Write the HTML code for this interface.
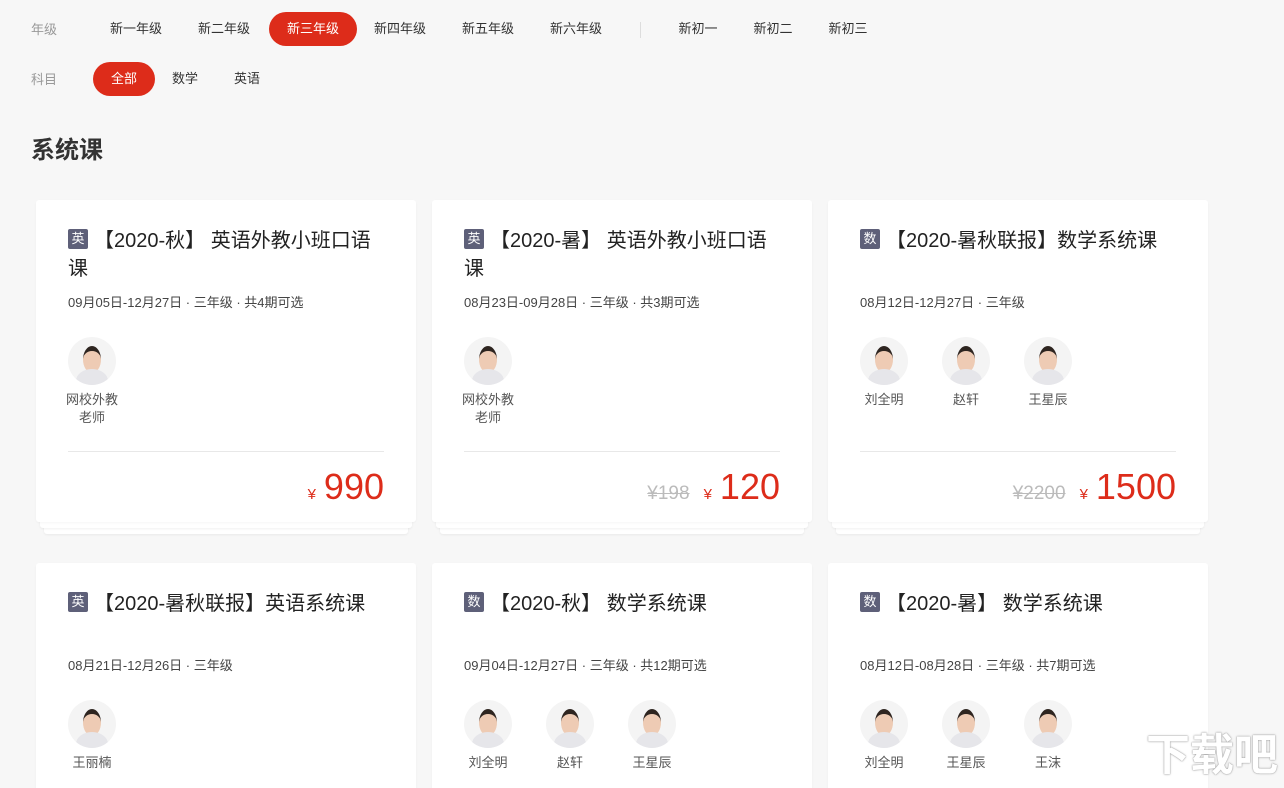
<!DOCTYPE html><html><head><meta charset="utf-8"><style>
*{margin:0;padding:0;box-sizing:border-box}
html,body{width:1284px;height:788px;overflow:hidden}
body{background:#f7f7f7;font-family:"Liberation Sans","Noto Sans CJK SC",sans-serif;position:relative;color:#222}
.a{position:absolute}
.lbl{color:#999;font-size:13px;line-height:18px}
.tab{font-size:13px;color:#333;height:34px;line-height:34px;text-align:center;border-radius:17px}
.on{background:#dd2c1a;color:#fff}
.card{position:absolute;width:380px;height:322px;background:#fff;border-radius:3px;box-shadow:0 1px 2px rgba(0,0,0,.04)}
.stk{position:absolute;background:#fff;border-radius:3px;box-shadow:0 1px 2px rgba(0,0,0,.06)}
.badge{position:absolute;left:32px;top:29px;width:20px;height:20px;background:#5e6079;color:#fff;font-size:13px;line-height:20px;text-align:center;border-radius:2px}
.ttl{position:absolute;left:32px;top:27px;width:320px;font-size:20px;line-height:28px;color:#222;text-indent:26px}
.date{position:absolute;left:32px;font-size:13px;color:#444}
.t{position:absolute;width:60px;text-align:center;font-size:13px;color:#555;line-height:18px}
.av{width:48px;height:48px;border-radius:50%;margin:0 auto 6px;position:relative;overflow:hidden;background:#f4f4f4}
.av:before{content:"";position:absolute;left:15px;top:9px;width:18px;height:22px;border-radius:50%;background:#eecbb4;border-top:5px solid #2e2520}
.av:after{content:"";position:absolute;left:8px;top:32px;width:32px;height:24px;border-radius:50% 50% 0 0;background:#e6e6ea}
.hr{position:absolute;left:32px;right:32px;top:251px;border-top:1px solid #e8e8e8}
.price{position:absolute;right:32px;top:266px;color:#dd2c1a;font-size:36px;white-space:nowrap}
.price .y{font-size:15px;margin-right:8px}
.price s{color:#bbb;font-size:19px;margin-right:14px}
</style></head><body>
<div class="a lbl" style="left:31px;top:21px">年级</div>
<div class="a tab" style="left:98px;top:12px;width:76px">新一年级</div>
<div class="a tab" style="left:186px;top:12px;width:76px">新二年级</div>
<div class="a tab on" style="left:269px;top:12px;width:88px">新三年级</div>
<div class="a tab" style="left:362px;top:12px;width:76px">新四年级</div>
<div class="a tab" style="left:450px;top:12px;width:76px">新五年级</div>
<div class="a tab" style="left:538px;top:12px;width:76px">新六年级</div>
<div class="a" style="left:640px;top:22px;height:16px;border-left:1px solid #ddd"></div>
<div class="a tab" style="left:668px;top:12px;width:60px">新初一</div>
<div class="a tab" style="left:743px;top:12px;width:60px">新初二</div>
<div class="a tab" style="left:818px;top:12px;width:60px">新初三</div>
<div class="a lbl" style="left:31px;top:71px">科目</div>
<div class="a tab on" style="left:93px;top:62px;width:62px">全部</div>
<div class="a tab" style="left:165px;top:62px;width:40px">数学</div>
<div class="a tab" style="left:227px;top:62px;width:40px">英语</div>
<div class="a" style="left:31px;top:130px;font-size:24px;font-weight:bold;color:#333">系统课</div>

<div class="stk" style="left:44px;top:520px;width:364px;height:14px"></div><div class="stk" style="left:40px;top:518px;width:372px;height:10px"></div>
<div class="card" style="left:36px;top:200px">
<div class="badge">英</div><div class="ttl">【2020-秋】 英语外教小班口语课</div>
<div class="date" style="top:92px">09月05日-12月27日 · 三年级 · 共4期可选</div>
<div class="t" style="left:26px;top:137px"><div class="av"></div>网校外教<br>老师</div>
<div class="hr"></div><div class="price"><span class="y">¥</span>990</div></div>

<div class="stk" style="left:440px;top:520px;width:364px;height:14px"></div><div class="stk" style="left:436px;top:518px;width:372px;height:10px"></div>
<div class="card" style="left:432px;top:200px">
<div class="badge">英</div><div class="ttl">【2020-暑】 英语外教小班口语课</div>
<div class="date" style="top:92px">08月23日-09月28日 · 三年级 · 共3期可选</div>
<div class="t" style="left:26px;top:137px"><div class="av"></div>网校外教<br>老师</div>
<div class="hr"></div><div class="price"><s>¥198</s><span class="y">¥</span>120</div></div>

<div class="stk" style="left:836px;top:520px;width:364px;height:14px"></div><div class="stk" style="left:832px;top:518px;width:372px;height:10px"></div>
<div class="card" style="left:828px;top:200px">
<div class="badge">数</div><div class="ttl">【2020-暑秋联报】数学系统课</div>
<div class="date" style="top:92px">08月12日-12月27日 · 三年级</div>
<div class="t" style="left:26px;top:137px"><div class="av"></div>刘全明</div>
<div class="t" style="left:108px;top:137px"><div class="av"></div>赵轩</div>
<div class="t" style="left:190px;top:137px"><div class="av"></div>王星辰</div>
<div class="hr"></div><div class="price"><s>¥2200</s><span class="y">¥</span>1500</div></div>

<div class="card" style="left:36px;top:563px">
<div class="badge">英</div><div class="ttl">【2020-暑秋联报】英语系统课</div>
<div class="date" style="top:92px">08月21日-12月26日 · 三年级</div>
<div class="t" style="left:26px;top:137px"><div class="av"></div>王丽楠</div></div>
<div class="card" style="left:432px;top:563px">
<div class="badge">数</div><div class="ttl">【2020-秋】 数学系统课</div>
<div class="date" style="top:92px">09月04日-12月27日 · 三年级 · 共12期可选</div>
<div class="t" style="left:26px;top:137px"><div class="av"></div>刘全明</div>
<div class="t" style="left:108px;top:137px"><div class="av"></div>赵轩</div>
<div class="t" style="left:190px;top:137px"><div class="av"></div>王星辰</div></div>
<div class="card" style="left:828px;top:563px">
<div class="badge">数</div><div class="ttl">【2020-暑】 数学系统课</div>
<div class="date" style="top:92px">08月12日-08月28日 · 三年级 · 共7期可选</div>
<div class="t" style="left:26px;top:137px"><div class="av"></div>刘全明</div>
<div class="t" style="left:108px;top:137px"><div class="av"></div>王星辰</div>
<div class="t" style="left:190px;top:137px"><div class="av"></div>王沫</div></div>
<div class="a" style="left:1146px;top:728px;font-size:44px;line-height:56px;font-weight:bold;color:#fff;white-space:nowrap;text-shadow:0 0 1px #888,0 0 2px #aaa">下载吧</div>
</body></html>
